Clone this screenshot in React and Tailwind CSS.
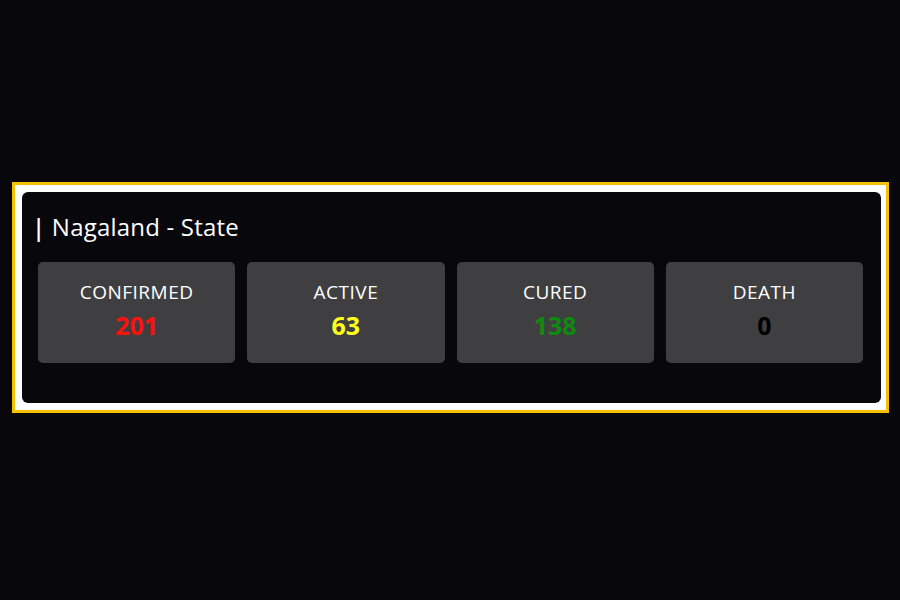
const stats = [
  { label: "CONFIRMED", value: "201", color: "text-[#ff1010]" },
  { label: "ACTIVE", value: "63", color: "text-[#ffff1a]" },
  { label: "CURED", value: "138", color: "text-[#0f8a0f]" },
  { label: "DEATH", value: "0", color: "text-black" },
];

const App = () => {
  return (
    <div
      className="w-[900px] h-[600px] bg-[#07070c] pt-[182px] pl-[12px]"
      style={{ fontFamily: '"Open Sans", "Noto Sans", sans-serif' }}
    >
      <div className="w-[877px] h-[231px] border-[3px] border-[#f5c000] bg-white pt-[7px] pb-[7px] pl-[7px] pr-[5px]">
        <div className="h-full bg-[#07070c] rounded-[6px] pl-[16px] pr-[18px] pt-[20px]">
          <h2 className="ml-[-6px] text-[24px] leading-[30px] text-white tracking-[0.2px]">
            <span className="font-semibold">|</span> Nagaland - State
          </h2>
          <div className="mt-[20px] grid grid-cols-4 gap-[12px]">
            {stats.map((s) => (
              <div
                key={s.label}
                className="h-[101px] bg-[#3f3f41] rounded-[5px] flex flex-col items-center pt-[17px]"
              >
                <div className="text-[19px] leading-[26px] text-white tracking-[0.5px]">{s.label}</div>
                <div className={`text-[25px] leading-[30px] font-bold mt-[5px] ${s.color}`}>{s.value}</div>
              </div>
            ))}
          </div>
        </div>
      </div>
    </div>
  );
};

export default App;
